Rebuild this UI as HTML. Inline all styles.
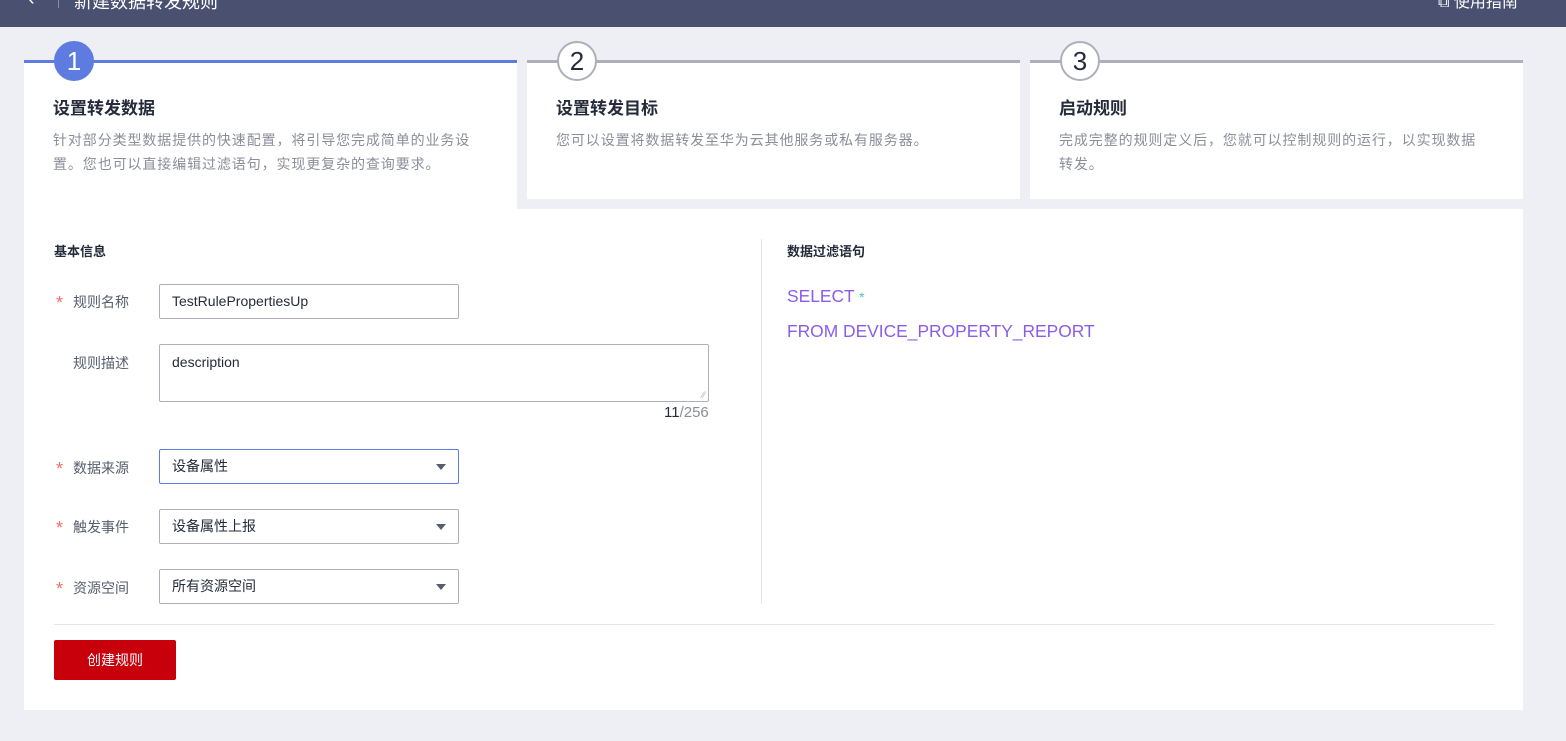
<!DOCTYPE html>
<html><head><meta charset="utf-8"><style>
*{box-sizing:border-box;margin:0;padding:0}
body{width:1566px;height:741px;background:#eeeff4;font-family:"Liberation Sans","Noto Sans CJK SC",sans-serif;position:relative;overflow:hidden;color:#252b3a}
.hdr{position:absolute;left:0;top:0;width:1566px;height:27px;background:#495070}
.abs{position:absolute}
.card{position:absolute;top:60px;background:#fff;border-top:3px solid #adb0b8;height:139px}
.card.on{border-top-color:#5e7ce0;height:150px}
.circ{position:absolute;top:-22px;width:40px;height:40px;border-radius:50%;border:2px solid #adb0b8;background:#fff;font-size:26px;text-align:center;line-height:36px;color:#252b3a;left:30px}
.on .circ{background:#5e7ce0;border-color:#5e7ce0;color:#fff}
.ct{position:absolute;left:29px;top:31px;font-size:17px;font-weight:bold;color:#252b3a}
.cd{position:absolute;left:29px;top:65px;width:460px;font-size:14px;line-height:24px;color:#8a8e99;white-space:nowrap;letter-spacing:0.9px}
.main{position:absolute;left:24px;top:209px;width:1499px;height:501px;background:#fff}
.lbl{position:absolute;left:56px;font-size:14px;color:#575d6c}
.lbl b{color:#f66f6a;font-weight:normal;font-size:18px;display:inline-block;width:17px;line-height:14px;vertical-align:-2px}
.inp{position:absolute;left:159px;width:300px;height:35px;border:1px solid #adb0b8;border-radius:2px;font-size:14px;padding:0 12px;line-height:33px;color:#252b3a}
.tri{position:absolute;right:12px;top:14px;width:0;height:0;border-left:5px solid transparent;border-right:5px solid transparent;border-top:6px solid #575d6c}
</style></head><body>
<div class="hdr">
<div class="abs" style="left:28px;top:-12px;color:#fff;font-size:20px">‹</div>
<div class="abs" style="left:58px;top:-6px;width:1px;height:14px;background:#8a8ea8"></div>
<div class="abs" style="left:74px;top:-12px;color:#fff;font-size:18px">新建数据转发规则</div>
<div class="abs" style="left:1438px;top:-12px;color:#fff;font-size:16px">⧉ 使用指南</div>
</div>
<div class="card on" style="left:24px;width:493px"><div class="circ">1</div><div class="ct">设置转发数据</div><div class="cd">针对部分类型数据提供的快速配置，将引导您完成简单的业务设<br>置。您也可以直接编辑过滤语句，实现更复杂的查询要求。</div></div>
<div class="card" style="left:527px;width:493px"><div class="circ">2</div><div class="ct">设置转发目标</div><div class="cd">您可以设置将数据转发至华为云其他服务或私有服务器。</div></div>
<div class="card" style="left:1030px;width:493px"><div class="circ">3</div><div class="ct">启动规则</div><div class="cd">完成完整的规则定义后，您就可以控制规则的运行，以实现数据<br>转发。</div></div>
<div class="main"></div>
<div class="abs" style="left:54px;top:241px;font-size:13px;font-weight:bold">基本信息</div>
<div class="abs" style="left:787px;top:241px;font-size:13px;font-weight:bold">数据过滤语句</div>
<div class="abs" style="left:761px;top:239px;width:1px;height:365px;background:#e3e4e8"></div>
<div class="abs" style="left:787px;top:286px;font-size:17.4px;color:#8a5de8">SELECT <span style="color:#50c8a8;font-size:14px">*</span></div>
<div class="abs" style="left:787px;top:321px;font-size:17.4px;color:#8a5de8">FROM DEVICE_PROPERTY_REPORT</div>
<div class="lbl" style="top:292px"><b>*</b>规则名称</div>
<div class="inp" style="top:284px">TestRulePropertiesUp</div>
<div class="lbl" style="top:353px;left:73px">规则描述</div>
<div class="inp" style="top:344px;width:550px;height:58px;line-height:normal;padding-top:9px">description<span style="position:absolute;right:3px;bottom:1px;font-size:9px;color:#adb0b8">⁄⁄</span></div>
<div class="abs" style="left:664px;top:404px;font-size:15px;color:#8a8e99"><span style="color:#252b3a">11</span>/256</div>
<div class="lbl" style="top:458px"><b>*</b>数据来源</div>
<div class="inp" style="top:449px;border-color:#5e7ce0">设备属性<div class="tri"></div></div>
<div class="lbl" style="top:517px"><b>*</b>触发事件</div>
<div class="inp" style="top:509px">设备属性上报<div class="tri"></div></div>
<div class="lbl" style="top:578px"><b>*</b>资源空间</div>
<div class="inp" style="top:569px">所有资源空间<div class="tri"></div></div>
<div class="abs" style="left:54px;top:624px;width:1440px;height:1px;background:#e3e4e8"></div>
<div class="abs" style="left:54px;top:640px;width:122px;height:40px;background:#c7000b;border-radius:2px;color:#fff;font-size:14px;text-align:center;line-height:40px">创建规则</div>
</body></html>
